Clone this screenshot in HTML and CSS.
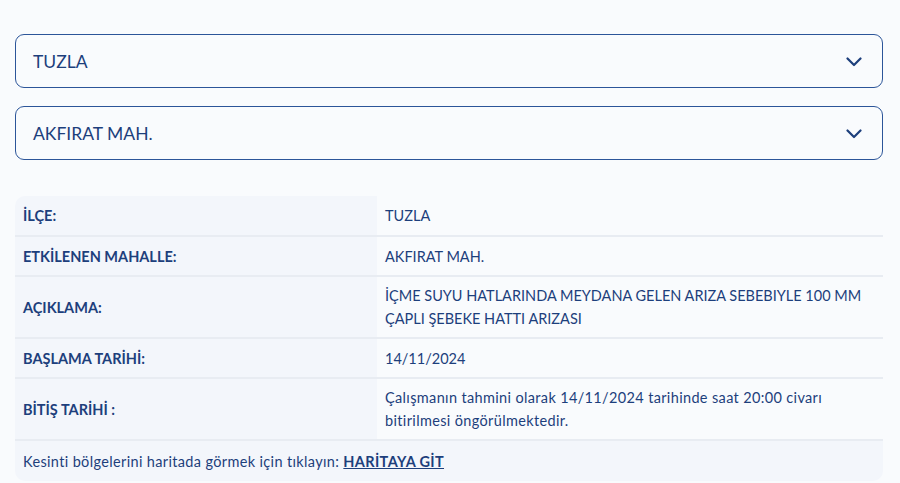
FILE: index.html
```html
<!DOCTYPE html>
<html lang="tr">
<head>
    <meta charset="UTF-8">
    <meta name="viewport" content="width=device-width, initial-scale=1.0">
    <link rel="stylesheet" href="styles.css">
    <title>Kesinti Sorgulama</title>
</head>
<body>
    <div class="contenedor">
        <div class="secim">
            <span>TUZLA</span>
            <svg width="16" height="10" viewBox="0 0 16 10"><path d="M1.5 1.5 L8 8 L14.5 1.5" fill="none" stroke="#1d3f7c" stroke-width="2.2" stroke-linecap="round" stroke-linejoin="round"/></svg>
        </div>
        <div class="secim">
            <span>AKFIRAT MAH.</span>
            <svg width="16" height="10" viewBox="0 0 16 10"><path d="M1.5 1.5 L8 8 L14.5 1.5" fill="none" stroke="#1d3f7c" stroke-width="2.2" stroke-linecap="round" stroke-linejoin="round"/></svg>
        </div>

        <table class="detay">
            <tr class="r1">
                <th>İLÇE:</th>
                <td>TUZLA</td>
            </tr>
            <tr class="r1">
                <th>ETKİLENEN MAHALLE:</th>
                <td>AKFIRAT MAH.</td>
            </tr>
            <tr class="r2">
                <th>AÇIKLAMA:</th>
                <td>İÇME SUYU HATLARINDA MEYDANA GELEN ARIZA SEBEBIYLE 100 MM ÇAPLI ŞEBEKE HATTI ARIZASI</td>
            </tr>
            <tr class="r1">
                <th>BAŞLAMA TARİHİ:</th>
                <td>14/11/2024</td>
            </tr>
            <tr class="r2">
                <th>BİTİŞ TARİHİ :</th>
                <td class="nota">Çalışmanın tahmini olarak 14/11/2024 tarihinde saat 20:00 civarı bitirilmesi öngörülmektedir.</td>
            </tr>
            <tr class="pie">
                <td colspan="2" class="nota">Kesinti bölgelerini haritada görmek için tıklayın: <a href="#">HARİTAYA GİT</a></td>
            </tr>
        </table>
    </div>
</body>
</html>
```

FILE: styles.css
```css
* {
    margin: 0;
    padding: 0;
    box-sizing: border-box;
    font-family: Lato, 'Noto Sans', sans-serif;
}
body {
    background-color: #f9fbfd;
    color: #1d3f7c;
}
.contenedor {
    width: 868px;
    margin-left: 15px;
    padding-top: 34px;
}
.secim {
    height: 54px;
    border: 1px solid #2c5599;
    border-radius: 9px;
    display: flex;
    align-items: center;
    justify-content: space-between;
    padding: 0 20px 0 17px;
    margin-bottom: 18px;
    font-size: 17.5px;
    background-color: #f9fbfd;
}
.secim svg {
    margin-top: 2px;
}
.detay {
    width: 100%;
    margin-top: 36px;
    border-collapse: collapse;
    border-radius: 10px;
    overflow: hidden;
    font-size: 14.5px;
}
.detay th {
    width: 362px;
    text-align: left;
    font-weight: 700;
    background-color: #f3f6fb;
    padding: 0 8px;
}
.detay td {
    background-color: #f9fbfd;
    padding: 0 8px;
    line-height: 23px;
}
.detay .nota {
    letter-spacing: 0.35px;
}
.detay tr {
    border-bottom: 2px solid #e8ecf2;
}
.r1 {
    height: 40px;
}
.r2 {
    height: 62px;
}
.detay .pie {
    height: 41px;
    border-bottom: none;
}
.detay .pie td {
    background-color: #f3f6fb;
}
.pie a {
    color: #1d3f7c;
    font-weight: 700;
}
```
